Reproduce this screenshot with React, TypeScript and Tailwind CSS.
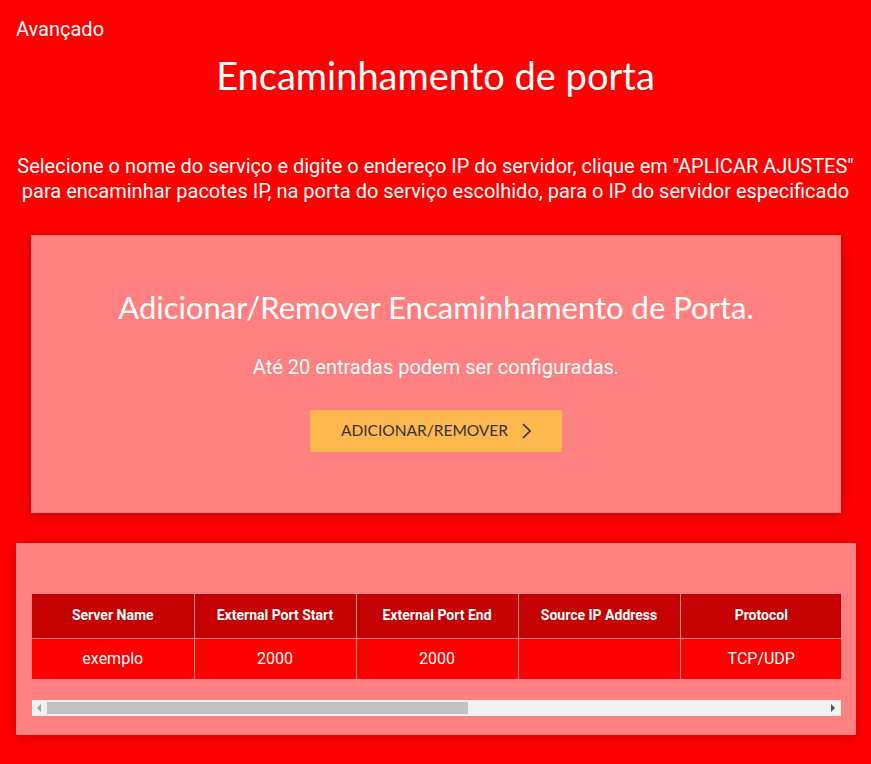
import React from "react";

const heads = ["Server Name", "External Port Start", "External Port End", "Source IP Address", "Protocol"];
const row = ["exemplo", "2000", "2000", "", "TCP/UDP"];

export default function App() {
  return (
    <div className="min-h-screen bg-[#ff0000] text-white pb-8" style={{ fontFamily: "Roboto, 'Liberation Sans', sans-serif" }}>
      <div className="px-4 pt-4 text-[20px] leading-[27px]">Avançado</div>
      <h1 className="mt-[10px] text-center text-[38px] leading-[44px]" style={{ fontFamily: "Lato, 'Noto Sans', sans-serif" }}>
        Encaminhamento de porta
      </h1>
      <p className="mt-[57px] px-1 text-center text-[20px] leading-[25px]">
        Selecione o nome do serviço e digite o endereço IP do servidor, clique em "APLICAR AJUSTES"
        <br />
        para encaminhar pacotes IP, na porta do serviço escolhido, para o IP do servidor especificado
      </p>

      <div className="mt-[31px] ml-[31px] mr-[30px] h-[278px] bg-[#ff8080] shadow-[0_2px_12px_rgba(0,0,0,0.25)] flex flex-col items-center pt-[52px]">
        <h2 className="text-[31px] leading-[40px]" style={{ fontFamily: "Lato, 'Noto Sans', sans-serif" }}>
          Adicionar/Remover Encaminhamento de Porta.
        </h2>
        <p className="mt-[27px] text-[20px] leading-[26px]">Até 20 entradas podem ser configuradas.</p>
        <button className="mt-[30px] w-[252px] h-[42px] bg-[#ffb84d] text-[#333333] flex items-center justify-center gap-[14px] text-[15.5px]" style={{ fontFamily: "Lato, 'Noto Sans', sans-serif" }}>
          <span>ADICIONAR/REMOVER</span>
          <svg width="9" height="16" viewBox="0 0 9 16" fill="none">
            <path d="M1 1l7 7-7 7" stroke="#333333" strokeWidth="1.6" />
          </svg>
        </button>
      </div>

      <div className="mt-[30px] ml-4 mr-[15px] bg-[#ff8080] shadow-[0_2px_12px_rgba(0,0,0,0.2)] pt-[51px] pl-4 pr-[15px] pb-[19px]">
        <div className="overflow-hidden">
          <table className="border-collapse table-fixed w-[820px]">
            <thead>
              <tr className="bg-[#c40000]">
                {heads.map((h, i) => (
                  <th key={i} className={`${i === 4 ? "w-[172px]" : "w-[162px]"} h-[44px] border-b border-[#ff8a8a] ${i === 4 ? "" : "border-r"} text-[14px] font-bold text-center ${i === 4 ? "pr-[10px]" : ""}`}>
                    {h}
                  </th>
                ))}
              </tr>
            </thead>
            <tbody>
              <tr className="bg-[#ff0000]">
                {row.map((c, i) => (
                  <td key={i} className={`h-[41px] border-[#ff8a8a] ${i === 4 ? "pr-[10px]" : "border-r"} text-[16px] text-center`}>
                    {c}
                  </td>
                ))}
              </tr>
            </tbody>
          </table>
        </div>
        <div className="mt-[21px] h-[16px] bg-[#f1f1f1] flex items-center">
          <div className="w-[15px] flex justify-center">
            <svg width="5" height="8" viewBox="0 0 5 8"><path d="M4 0v8L0 4z" fill="#a3a3a3" /></svg>
          </div>
          <div className="w-[421px] h-[12px] bg-[#c1c1c1]" />
          <div className="flex-1" />
          <div className="w-[15px] flex justify-center">
            <svg width="5" height="8" viewBox="0 0 5 8"><path d="M0 0v8l4-4z" fill="#505050" /></svg>
          </div>
        </div>
      </div>
    </div>
  );
}
